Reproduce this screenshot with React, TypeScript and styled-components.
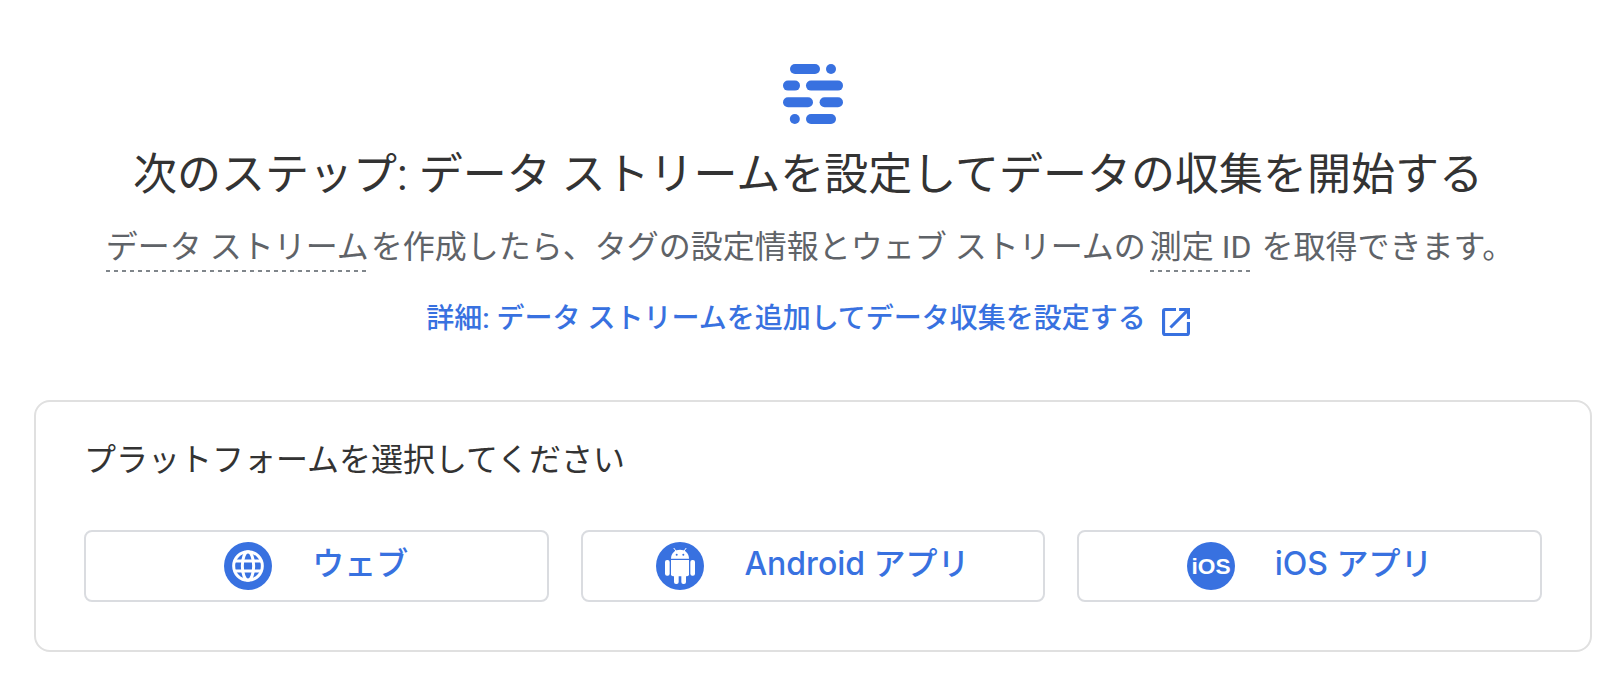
import React from "react";
import styled, { createGlobalStyle } from "styled-components";

const BLUE = "#3871e0";

const GlobalStyle = createGlobalStyle`
  * { box-sizing: border-box; }
  body {
    margin: 0;
    background: #fff;
    color: #333;
    font-family: Roboto, "Noto Sans CJK JP", sans-serif;
  }
`;

const Page = styled.main`
  padding: 64px 24px 40px 34px;
`;

const Intro = styled.header`
  display: flex;
  flex-direction: column;
  align-items: center;
  text-align: center;
`;

const Copy = styled.div`
  display: flex;
  flex-direction: column;
  align-items: center;
  padding-right: 10px;
`;

const Logo = styled.svg`
  display: block;
  width: 60px;
  height: 60px;
`;

const Title = styled.h1`
  margin: 20px 0 0;
  font-size: 44px;
  font-weight: 400;
  line-height: 62px;
`;

const Summary = styled.p`
  margin: 15px 0 0;
  color: #5f6368;
  font-size: 32px;
  line-height: 52px;
`;

const Term = styled.span`
  padding-bottom: 6px;
  margin: 0 2px 0 4px;
  background: repeating-linear-gradient(90deg, #80868b 0 4px, transparent 4px 8px) left bottom / 100% 2px no-repeat;
`;

const MoreLink = styled.a`
  display: inline-flex;
  align-items: center;
  gap: 16px;
  margin-top: 24px;
  color: ${BLUE};
  font-size: 28px;
  font-weight: 500;
  line-height: 44px;
  text-decoration: none;
`;

const LinkIcon = styled.svg`
  width: 28px;
  height: 28px;
  margin-top: 6px;
`;

const Panel = styled.section`
  margin-top: 59px;
  padding: 28px 48px 48px;
  border: 2px solid #e0e0e0;
  border-radius: 16px;
`;

const PanelTitle = styled.h2`
  margin: 0;
  font-size: 32px;
  font-weight: 400;
  line-height: 60px;
`;

const Platforms = styled.div`
  display: grid;
  grid-template-columns: repeat(3, 1fr);
  gap: 32px;
  margin-top: 40px;
`;

const PlatformButton = styled.button`
  display: flex;
  align-items: center;
  justify-content: center;
  gap: 40px;
  height: 72px;
  padding: 0;
  border: 2px solid #dadce0;
  border-radius: 8px;
  background: #fff;
  color: ${BLUE};
  font-family: Inter, "Noto Sans CJK JP", sans-serif;
  font-size: 32px;
  font-weight: 500;
  line-height: 48px;
  cursor: pointer;
`;

const PlatformLabel = styled.span`
  padding-bottom: 4px;
`;

const PlatformIcon = styled.svg`
  width: 48px;
  height: 48px;
`;

const Wordmark = styled.text`
  font-family: "Liberation Sans", sans-serif;
  font-size: 68px;
  font-weight: 700;
`;

function WebIcon() {
  return (
    <PlatformIcon viewBox="0 0 144 144" aria-hidden="true">
      <circle cx="72" cy="72" r="72" fill={BLUE} />
      <g fill="none" stroke="#fff" strokeWidth="9">
        <circle cx="72" cy="72" r="43" />
        <ellipse cx="72" cy="72" rx="17" ry="43" />
        <path d="M32 57h80M32 87h80" />
      </g>
    </PlatformIcon>
  );
}

function AndroidIcon() {
  return (
    <PlatformIcon viewBox="0 0 144 144" aria-hidden="true">
      <circle cx="72" cy="72" r="72" fill={BLUE} />
      <g fill="#fff">
        <path d="M45 50c0-17 12-27 27-27s27 10 27 27z" />
        <path d="M45 54h54v43a6 6 0 0 1-6 6H51a6 6 0 0 1-6-6z" />
        <rect x="27" y="54" width="14" height="47" rx="6" />
        <rect x="103" y="54" width="14" height="47" rx="6" />
        <rect x="54" y="90" width="14" height="36" rx="6" />
        <rect x="76" y="90" width="14" height="36" rx="6" />
      </g>
      <path d="M54 19l8 11M90 19l-8 11" stroke="#fff" strokeWidth="3" strokeLinecap="round" />
      <circle cx="62" cy="38" r="3" fill={BLUE} />
      <circle cx="82" cy="38" r="3" fill={BLUE} />
    </PlatformIcon>
  );
}

function IosIcon() {
  return (
    <PlatformIcon viewBox="0 0 144 144" aria-hidden="true">
      <circle cx="72" cy="72" r="72" fill={BLUE} />
      <Wordmark x="72" y="96" textAnchor="middle" fill="#fff">iOS</Wordmark>
    </PlatformIcon>
  );
}

export default function App() {
  return (
    <>
      <GlobalStyle />
      <Page>
        <Intro>
          <Logo viewBox="0 0 60 60" fill={BLUE} aria-hidden="true">
            <rect x="7" y="0" width="30" height="10" rx="5" />
            <circle cx="48" cy="5" r="5" />
            <rect x="0" y="16.6" width="17" height="10" rx="5" />
            <rect x="23" y="16.6" width="37" height="10" rx="5" />
            <rect x="0" y="33.3" width="30" height="10" rx="5" />
            <rect x="36.6" y="33.3" width="23.4" height="10" rx="5" />
            <circle cx="11.8" cy="55" r="5" />
            <rect x="23" y="50" width="30" height="10" rx="5" />
          </Logo>
          <Copy>
            <Title>次のステップ: データ ストリームを設定してデータの収集を開始する</Title>
            <Summary>
              <Term>データ ストリーム</Term>を作成したら、タグの設定情報とウェブ ストリームの<Term>測定 ID</Term> を取得できます。
            </Summary>
            <MoreLink href="#learn-more">
              詳細: データ ストリームを追加してデータ収集を設定する
              <LinkIcon viewBox="3 3 18 18" fill="currentColor" aria-hidden="true">
                <path d="M19 19H5V5h7V3H5a2 2 0 0 0-2 2v14a2 2 0 0 0 2 2h14a2 2 0 0 0 2-2v-7h-2v7zM14 3v2h3.59l-9.83 9.83 1.41 1.41L19 6.41V10h2V3h-7z" />
              </LinkIcon>
            </MoreLink>
          </Copy>
        </Intro>
        <Panel>
          <PanelTitle>プラットフォームを選択してください</PanelTitle>
          <Platforms>
            <PlatformButton type="button">
              <WebIcon />
              <PlatformLabel>ウェブ</PlatformLabel>
            </PlatformButton>
            <PlatformButton type="button">
              <AndroidIcon />
              <PlatformLabel>Android アプリ</PlatformLabel>
            </PlatformButton>
            <PlatformButton type="button">
              <IosIcon />
              <PlatformLabel>iOS アプリ</PlatformLabel>
            </PlatformButton>
          </Platforms>
        </Panel>
      </Page>
    </>
  );
}
